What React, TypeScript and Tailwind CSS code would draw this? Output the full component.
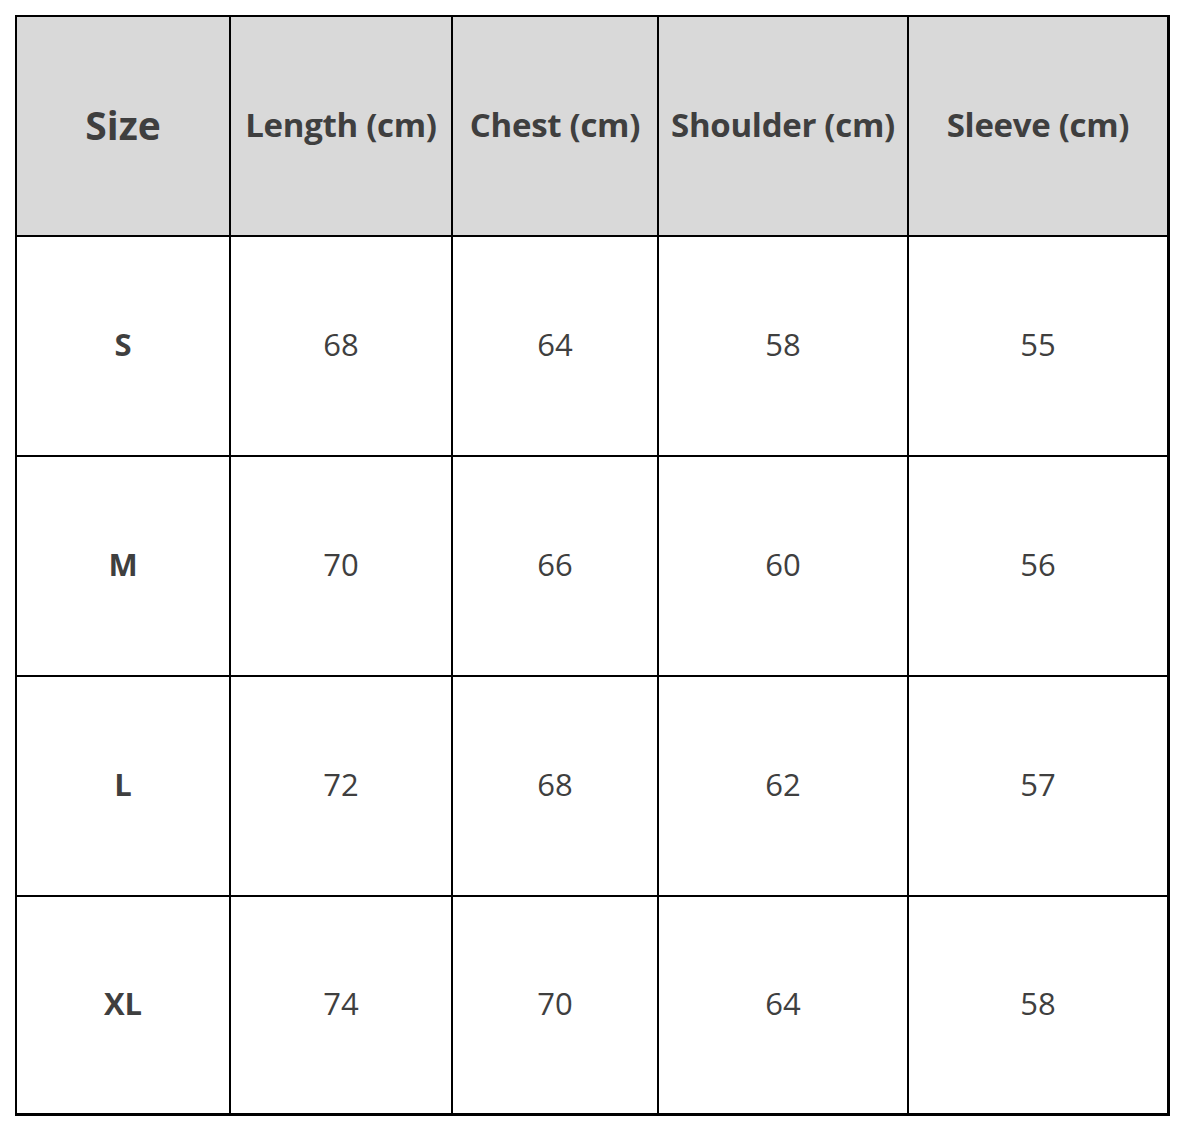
const HEADERS = ['Size', 'Length (cm)', 'Chest (cm)', 'Shoulder (cm)', 'Sleeve (cm)'];

const ROWS: [string, number, number, number, number][] = [
  ['S', 68, 64, 58, 55],
  ['M', 70, 66, 60, 56],
  ['L', 72, 68, 62, 57],
  ['XL', 74, 70, 64, 58],
];

export default function App() {
  return (
    <div className="min-h-screen bg-white p-[15px] font-['Open_Sans',sans-serif] text-[#3f3f3f]">
      <div className="grid w-[1155px] grid-cols-[212px_220px_204px_248px_258px] grid-rows-[218px_218px_218px_218px_216px] gap-[2px] border-t-2 border-l-2 border-r-[3px] border-b-[3px] border-black bg-black">
        {HEADERS.map((h, i) => (
          <div
            key={h}
            className={`flex items-center justify-center bg-[#d9d9d9] pb-[2px] font-bold ${i === 0 ? 'text-[39px]' : 'text-[33px] tracking-[-0.3px]'}`}
          >
            {h}
          </div>
        ))}
        {ROWS.map((row) =>
          row.map((cell, i) => (
            <div
              key={`${row[0]}-${i}`}
              className={`flex items-center justify-center bg-white pb-[4px] text-[31px] ${i === 0 ? 'font-bold' : 'font-normal'}`}
            >
              {cell}
            </div>
          )),
        )}
      </div>
    </div>
  );
}
